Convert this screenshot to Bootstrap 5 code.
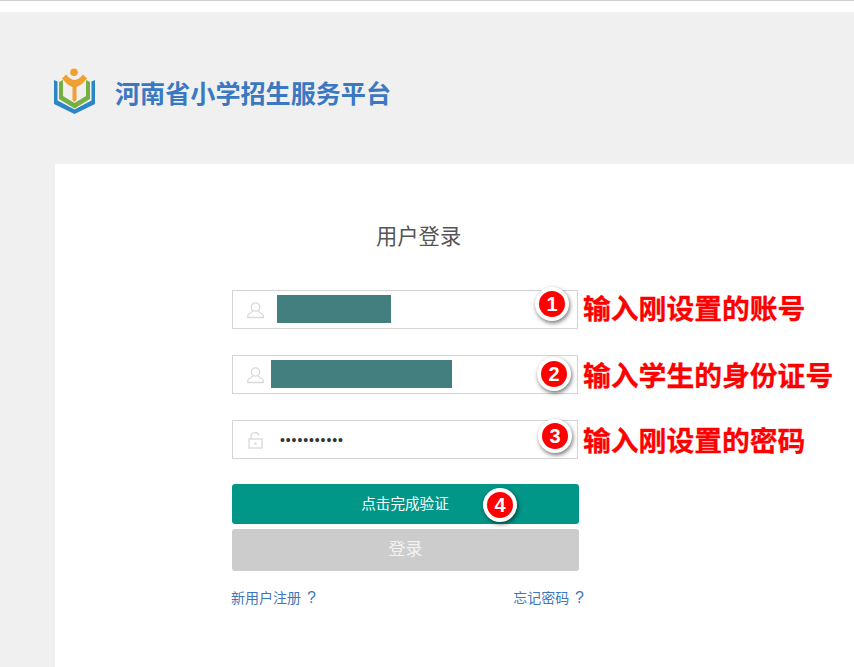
<!DOCTYPE html>
<html lang="zh-CN">
<head>
<meta charset="utf-8">
<title>河南省小学招生服务平台</title>
<link href="https://cdn.jsdelivr.net/npm/bootstrap@5.3.0/dist/css/bootstrap.min.css" rel="stylesheet">
<style>
html,body{height:667px;overflow:hidden;background:#f0f0f0;font-family:"Liberation Sans","Noto Sans CJK SC",sans-serif;}
.top-strip{height:12px;background:#fff;border-top:1px solid #cfcfcf;}
.brand-bar{height:152px;padding:56px 0 0 54px;}
.brand-name{margin:0 0 0 20px;padding-top:8px;font-size:25.100px;line-height:36px;font-weight:700;color:#3a78c2;white-space:nowrap;}
.login-panel{margin-left:55px;height:503px;background:#fff;padding-top:58px;overflow:hidden;}
.login-title{margin:0 0 38px 321px;font-size:21.300px;line-height:30px;font-weight:400;color:#555;}
.login-form{margin-left:177px;}
.entry-line{height:39px;margin-bottom:26px;}
.entry-box{position:relative;flex:0 0 346px;height:39px;border:1px solid #d4d4d4;background:#fff;}
.entry-icon{position:absolute;left:14px;top:10px;}
.masked{height:28px;margin-bottom:1px;background:#437f7f;}
.mask-a{width:114px;margin-left:44px;}
.mask-b{width:181px;margin-left:38px;}
.pw-dots{margin-left:47px;font-size:14px;line-height:1;letter-spacing:.9px;color:#333;}
.hint-text{margin:0 0 0 5px;font-size:27.800px;line-height:39px;font-weight:700;color:#f00;white-space:nowrap;-webkit-text-stroke:.3px #f00;}
.hint-low{padding-top:2px;}
.step-mark{position:absolute;z-index:2;width:34px;height:34px;border:4px solid #fff;border-radius:50%;background:#f00;color:#fff;font-size:20px;font-weight:700;line-height:26px;text-align:center;box-shadow:1px 2px 4px rgba(0,0,0,.55);}
.step-1{left:302px;top:-4px;}
.step-2{left:304px;top:1px;}
.step-3{left:305px;top:-2px;}
.step-4{left:251px;top:4px;}
.btn-area{width:347px;}
.verify-btn{position:relative;display:block;width:347px;height:40px;margin-top:-1px;padding:0 1px 0 0;border:0;border-radius:3px;background:#009688;color:#fff;font-size:14.600px;line-height:40px;}
.btn.login-btn:disabled{display:block;width:347px;height:42px;margin-top:5px;padding:0;border:0;border-radius:3px;background:#ccc;color:#f2f2f2;font-size:17px;line-height:42px;opacity:1;}
.link-row{width:353px;margin:16px 0 0 -1px;font-size:14px;line-height:22px;word-spacing:2px;}
.link-row a{color:#3f77b8;text-decoration:none;}
.link-row b{font-size:16px;font-weight:400;}
</style>
</head>
<body>
<div class="top-strip"></div>
<header class="brand-bar d-flex align-items-start">
  <svg width="41" height="46" viewBox="0 0 41 46" aria-hidden="true">
    <circle cx="20" cy="4.200" r="3.800" fill="#f0a030"/>
    <path d="M8 10.500l4-4q4 5 8.500 5.500q4.500-.5 8.500-5.500l4 4q-5 6.500-10.500 8.500v13l-2 2-2-2v-13q-5.500-2-10.500-8.500z" fill="#f0a030"/>
    <path d="M5 14l4-2v16l11.500 7 11.500-7v-16l4 2v17l-15.500 9.500-15.500-9.500z" fill="#76b043"/>
    <path d="M0 12l3.500 1.500v19l17 9 17-9v-19l3.500-1.500v24l-20.500 10-20.500-10z" fill="#2a86c4"/>
  </svg>
  <h1 class="brand-name">河南省小学招生服务平台</h1>
</header>
<main class="login-panel">
  <h2 class="login-title">用户登录</h2>
  <form class="login-form">
    <div class="entry-line d-flex">
      <div class="entry-box d-flex align-items-center">
        <svg class="entry-icon" width="17" height="18" viewBox="0 0 17 18" fill="none" stroke="#d9d9d9" stroke-width="1.300" aria-hidden="true"><circle cx="8.500" cy="6" r="4.200"/><path d="M5.800 9.500q-1 2.500-4.300 3.500q-.8.500-.8 3.500h15.600q0-3-.8-3.500q-3.300-1-4.300-3.500"/></svg>
        <div class="masked mask-a"></div>
        <span class="step-mark step-1">1</span>
      </div>
      <p class="hint-text">输入刚设置的账号</p>
    </div>
    <div class="entry-line d-flex">
      <div class="entry-box d-flex align-items-center">
        <svg class="entry-icon" width="17" height="18" viewBox="0 0 17 18" fill="none" stroke="#d9d9d9" stroke-width="1.300" aria-hidden="true"><circle cx="8.500" cy="6" r="4.200"/><path d="M5.800 9.500q-1 2.500-4.300 3.500q-.8.500-.8 3.500h15.600q0-3-.8-3.500q-3.300-1-4.300-3.500"/></svg>
        <div class="masked mask-b"></div>
        <span class="step-mark step-2">2</span>
      </div>
      <p class="hint-text hint-low">输入学生的身份证号</p>
    </div>
    <div class="entry-line d-flex">
      <div class="entry-box d-flex align-items-center">
        <svg class="entry-icon" width="17" height="18" viewBox="0 0 17 18" fill="none" stroke="#d9d9d9" stroke-width="1.300" aria-hidden="true"><path d="M4 8V5.500a4 4 0 0 1 7.800-1.200"/><rect x="2" y="8" width="13" height="9"/><path d="M8.500 11.500v2.500" stroke-width="2"/></svg>
        <span class="pw-dots">•••••••••••</span>
        <span class="step-mark step-3">3</span>
      </div>
      <p class="hint-text hint-low">输入刚设置的密码</p>
    </div>
    <div class="btn-area">
      <button type="button" class="btn verify-btn">点击完成验证<span class="step-mark step-4">4</span></button>
      <button type="button" class="btn login-btn" disabled>登录</button>
    </div>
    <div class="link-row d-flex justify-content-between">
      <a href="#">新用户注册 <b>?</b></a>
      <a href="#">忘记密码 <b>?</b></a>
    </div>
  </form>
</main>
</body>
</html>
